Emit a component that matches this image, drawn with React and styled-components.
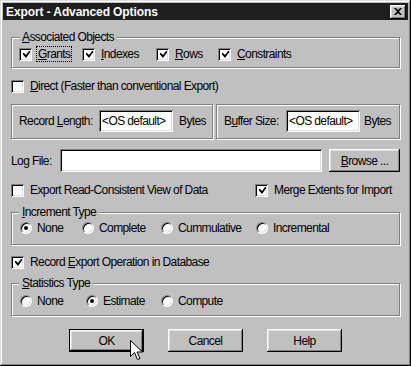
import React from 'react'
import styled, { createGlobalStyle } from 'styled-components'

const GlobalStyle = createGlobalStyle`
  html, body {
    margin: 0;
    padding: 0;
    background: #c0c0c0;
  }
  body {
    font-family: 'Liberation Sans', Arial, sans-serif;
    font-size: 12px;
    letter-spacing: -0.6px;
    color: #000;
  }
`

const raised = `
  box-shadow: inset -1px -1px #000, inset 1px 1px #fff, inset -2px -2px #808080, inset 2px 2px #dfdfdf;
`
const sunken = `
  box-shadow: inset 1px 1px #808080, inset -1px -1px #fff, inset 2px 2px #000, inset -2px -2px #dfdfdf;
`
const etched = `
  border: 1px solid #808080;
  box-shadow: inset 1px 1px #fff, 1px 1px #fff;
`

const incrementTypes = [
  { label: 'None', w: 62, on: true },
  { label: 'Complete', w: 79 },
  { label: 'Cummulative', w: 95 },
  { label: 'Incremental' }
]

const statisticsTypes = [
  { label: 'None', w: 66 },
  { label: 'Estimate', w: 75, on: true },
  { label: 'Compute' }
]

const App = () => {
  return (
    <>
      <GlobalStyle />
      <Window>
        <TitleBar>
          <span>Export - Advanced Options</span>
          <CloseButton>
            <svg width="8" height="7" viewBox="0 0 8 7">
              <path d="M0 0h2l2 2 2-2h2L5 3.5 8 7H6L4 5 2 7H0l3-3.5z" fill="#000" />
            </svg>
          </CloseButton>
        </TitleBar>

        <Content>
          <GroupBox $mt={10} $pt={3} $pb={6}>
            <Legend>
              <u>A</u>ssociated Objects
            </Legend>
            <Row>
              <CheckItem $w={63} $gap={5} checked>
                <Focus>
                  <u>G</u>rants
                </Focus>
              </CheckItem>
              <CheckItem $w={74} checked>
                <u>I</u>ndexes
              </CheckItem>
              <CheckItem $w={62} checked>
                <u>R</u>ows
              </CheckItem>
              <CheckItem checked>
                <u>C</u>onstraints
              </CheckItem>
            </Row>
          </GroupBox>

          <Row $mt={11}>
            <CheckItem>
              <u>D</u>irect (Faster than conventional Export)
            </CheckItem>
          </Row>

          <PanelRow>
            <Panel $w={202}>
              <FieldLabel $w={80}>
                Record <u>L</u>ength:
              </FieldLabel>
              <TextInput $w={74} readOnly value="<OS default>" />
              <Unit $ml={6}>Bytes</Unit>
            </Panel>
            <Panel>
              <FieldLabel $w={62}>
                B<u>u</u>ffer Size:
              </FieldLabel>
              <TextInput $w={74} readOnly value="<OS default>" />
              <Unit $ml={4}>Bytes</Unit>
            </Panel>
          </PanelRow>

          <Row $mt={10} $h={23}>
            <FieldLabel $w={49}>
              Lo<u>g</u> File:
            </FieldLabel>
            <TextInput $w={262} $h={23} readOnly value="" />
            <Button $w={71} $ml={7}>
              <u>B</u>rowse ...
            </Button>
          </Row>

          <Row $mt={11}>
            <CheckItem $w={244}>Export Read-Consistent View of Data</CheckItem>
            <CheckItem checked>Merge Extents for Import</CheckItem>
          </Row>

          <GroupBox $mt={8} $pt={2} $pb={9}>
            <Legend>
              <u>I</u>ncrement Type
            </Legend>
            <Row $pl={1}>
              {incrementTypes.map((item, index) => (
                <RadioItem key={index} $w={item.w} checked={item.on}>
                  {item.label}
                </RadioItem>
              ))}
            </Row>
          </GroupBox>

          <Row $mt={10}>
            <CheckItem checked>
              Record <u>E</u>xport Operation in Database
            </CheckItem>
          </Row>

          <GroupBox $mt={7} $pt={4} $pb={7}>
            <Legend>
              <u>S</u>tatistics Type
            </Legend>
            <Row $pl={1}>
              {statisticsTypes.map((item, index) => (
                <RadioItem key={index} $w={item.w} checked={item.on}>
                  {item.label}
                </RadioItem>
              ))}
            </Row>
          </GroupBox>

          <ButtonRow>
            <Button $w={75} $default>
              OK
            </Button>
            <Button $w={75}>Cancel</Button>
            <Button $w={75}>Help</Button>
          </ButtonRow>
        </Content>

        <Pointer width="13" height="21" viewBox="0 0 13 21">
          <path
            d="M0.5 0.5v16l4-4 3 7 2.5-1-3-6.5h5.5z"
            fill="#fff"
            stroke="#000"
            strokeWidth="1"
            strokeLinejoin="miter"
          />
        </Pointer>
      </Window>
    </>
  )
}

const CheckItem = ({ checked, children, $w, $gap }) => {
  return (
    <Item $w={$w} $gap={$gap ?? 6}>
      <CheckBox>
        {checked && (
          <svg width="7" height="7" viewBox="0 0 7 7">
            <path d="M0 2h1l2 2 3-4h1v1.5L3 7 0 3.5z" fill="#000" />
          </svg>
        )}
      </CheckBox>
      <span>{children}</span>
    </Item>
  )
}

const RadioItem = ({ checked, children, $w }) => {
  return (
    <Item $w={$w} $gap={5}>
      <RadioCircle>{checked && <Dot />}</RadioCircle>
      <span>{children}</span>
    </Item>
  )
}

export default App

const Window = styled.div`
  position: relative;
  width: 411px;
  height: 366px;
  box-sizing: border-box;
  padding: 3px;
  background: #c0c0c0;
  box-shadow: inset -1px -1px #000, inset 1px 1px #dfdfdf, inset -2px -2px #808080, inset 2px 2px #fff;
  display: flex;
  flex-direction: column;
  overflow: hidden;
`

const TitleBar = styled.div`
  height: 17px;
  flex: none;
  background: #1e1e1e;
  color: #fff;
  display: flex;
  align-items: center;
  justify-content: space-between;
  padding: 0 2px 0 3px;
  font-weight: bold;
  letter-spacing: -0.1px;
`

const CloseButton = styled.div`
  width: 16px;
  height: 14px;
  background: #c0c0c0;
  ${raised}
  display: flex;
  align-items: center;
  justify-content: center;
`

const Content = styled.div`
  display: flex;
  flex-direction: column;
  padding: 0 8px;
`

const GroupBox = styled.fieldset`
  margin: ${p => p.$mt}px 0 0;
  padding: ${p => p.$pt}px 8px ${p => p.$pb}px 7px;
  min-width: 0;
  ${etched}
`

const Legend = styled.legend`
  padding: 0 3px;
  line-height: 14px;
  background: #c0c0c0;
`

const Row = styled.div`
  display: flex;
  align-items: center;
  height: ${p => p.$h || 14}px;
  margin-top: ${p => p.$mt || 0}px;
  padding-left: ${p => p.$pl || 0}px;
  white-space: nowrap;
`

const Item = styled.label`
  display: inline-flex;
  align-items: center;
  gap: ${p => p.$gap}px;
  flex: none;
  width: ${p => (p.$w ? `${p.$w}px` : 'auto')};
  line-height: 14px;
`

const Focus = styled.span`
  outline: 1px dotted #000;
  padding: 0 1px;
  line-height: 13px;
`

const CheckBox = styled.span`
  width: 13px;
  height: 13px;
  flex: none;
  box-sizing: border-box;
  background: #fff;
  ${sunken}
  display: flex;
  align-items: center;
  justify-content: center;
  padding: 1px 0 0 1px;
`

const RadioCircle = styled.span`
  width: 12px;
  height: 12px;
  flex: none;
  box-sizing: border-box;
  border-radius: 50%;
  background: #fff;
  border: 1px solid;
  border-color: #808080 #fff #fff #808080;
  box-shadow: inset 1px 1px #000, inset -1px -1px #dfdfdf;
  display: flex;
  align-items: center;
  justify-content: center;
`

const Dot = styled.span`
  width: 4px;
  height: 4px;
  border-radius: 50%;
  background: #000;
`

const PanelRow = styled.div`
  display: flex;
  margin-top: 11px;
  gap: 3px;
`

const Panel = styled.div`
  display: flex;
  align-items: center;
  flex: ${p => (p.$w ? 'none' : '1')};
  width: ${p => (p.$w ? `${p.$w}px` : 'auto')};
  box-sizing: border-box;
  padding: 5px 0 6px 7px;
  white-space: nowrap;
  ${etched}
`

const FieldLabel = styled.span`
  width: ${p => p.$w}px;
  flex: none;
`

const TextInput = styled.input`
  width: ${p => p.$w}px;
  height: ${p => p.$h || 22}px;
  box-sizing: border-box;
  flex: none;
  margin: 0;
  border: none;
  padding: 0 2px 1px 3px;
  background: #fff;
  ${sunken}
  font: inherit;
  letter-spacing: inherit;
  color: #000;
  outline: none;
`

const Unit = styled.span`
  margin-left: ${p => p.$ml}px;
`

const Button = styled.button`
  width: ${p => p.$w}px;
  height: 23px;
  flex: none;
  margin: 0 0 0 ${p => p.$ml || 0}px;
  padding: 0;
  border: none;
  background: #c0c0c0;
  font: inherit;
  letter-spacing: inherit;
  color: #000;
  ${raised}
  ${p =>
    p.$default &&
    `box-shadow: inset 0 0 0 1px #000, inset -2px -2px #000, inset 2px 2px #fff, inset -3px -3px #808080, inset 3px 3px #dfdfdf;`}
`

const ButtonRow = styled.div`
  display: flex;
  justify-content: center;
  gap: 24px;
  margin-top: 13px;
`

const Pointer = styled.svg`
  position: absolute;
  left: 130px;
  top: 340px;
`
